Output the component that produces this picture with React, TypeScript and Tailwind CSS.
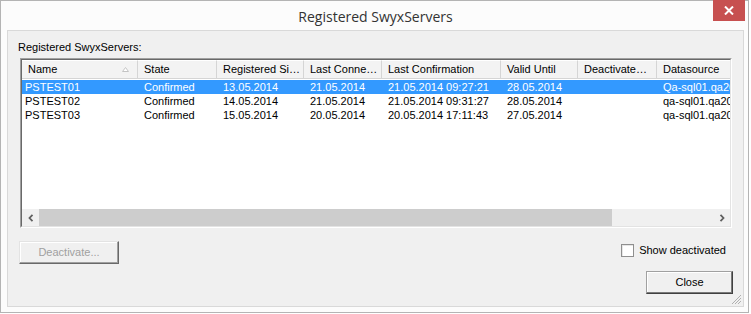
import React from 'react';

// --- Data ---
interface ServerRow {
  name: string;
  state: string;
  registered: string;
  lastConnect: string;
  lastConfirm: string;
  validUntil: string;
  deactivated: string;
  datasource: string;
}

const rows: ServerRow[] = [
  { name: 'PSTEST01', state: 'Confirmed', registered: '13.05.2014', lastConnect: '21.05.2014', lastConfirm: '21.05.2014 09:27:21', validUntil: '28.05.2014', deactivated: '', datasource: 'Qa-sql01.qa2014.local' },
  { name: 'PSTEST02', state: 'Confirmed', registered: '14.05.2014', lastConnect: '21.05.2014', lastConfirm: '21.05.2014 09:31:27', validUntil: '28.05.2014', deactivated: '', datasource: 'qa-sql01.qa2014.local' },
  { name: 'PSTEST03', state: 'Confirmed', registered: '15.05.2014', lastConnect: '20.05.2014', lastConfirm: '20.05.2014 17:11:43', validUntil: '27.05.2014', deactivated: '', datasource: 'qa-sql01.qa2014.local' },
];

// column widths measured off the screenshot
const columns: { label: string; key: keyof ServerRow; w: string }[] = [
  { label: 'Name', key: 'name', w: 'w-[116px]' },
  { label: 'State', key: 'state', w: 'w-[79px]' },
  { label: 'Registered Si…', key: 'registered', w: 'w-[87px]' },
  { label: 'Last Conne…', key: 'lastConnect', w: 'w-[78px]' },
  { label: 'Last Confirmation', key: 'lastConfirm', w: 'w-[119px]' },
  { label: 'Valid Until', key: 'validUntil', w: 'w-[77px]' },
  { label: 'Deactivate…', key: 'deactivated', w: 'w-[79px]' },
  { label: 'Datasource', key: 'datasource', w: 'w-[130px]' },
];

const uiFont = { fontFamily: '"Liberation Sans", Arial, sans-serif' };

function ChevronLeft() {
  return (
    <svg width="6" height="8" viewBox="0 0 6 8"><polyline points="4.5,0.8 1.5,4 4.5,7.2" fill="none" stroke="#606060" strokeWidth="1.8" /></svg>
  );
}

function ChevronRight() {
  return (
    <svg width="6" height="8" viewBox="0 0 6 8"><polyline points="1.5,0.8 4.5,4 1.5,7.2" fill="none" stroke="#606060" strokeWidth="1.8" /></svg>
  );
}

function App() {
  return (
    <div className="w-[751px] h-[314px] bg-white text-[11px] text-black" style={uiFont}>
      {/* --- Window frame --- */}
      <div className="relative w-[749px] h-[313px] border border-[#b4b4b4] bg-[#fcfcfc] flex flex-col pl-[6px] pr-[4px] pb-[5px]">
        {/* Title bar */}
        <div className="h-[29px] shrink-0 flex items-center justify-center">
          <span className="text-[14px] text-[#333333] mt-[1px]" style={{ fontFamily: '"Open Sans", "Noto Sans", sans-serif' }}>Registered SwyxServers</span>
        </div>
        <button className="absolute top-[-1px] right-[3px] w-[32px] h-[21px] bg-[#c75050] flex items-center justify-center">
          <svg width="10" height="9" viewBox="0 0 10 9"><path d="M1 0.5 L9 8.5 M9 0.5 L1 8.5" stroke="white" strokeWidth="2" /></svg>
        </button>

        {/* Client area */}
        <div className="relative flex-1 border border-[#d9d9d9] bg-[#f0f0f0] flex flex-col pl-[12px] pr-[11px]">
          <div className="mt-[10px] h-[17px] leading-[13px] ml-[-2px]">Registered SwyxServers:</div>

          {/* List view (sunken) */}
          <div className="w-[712px] h-[170px] border border-t-[#a0a0a0] border-l-[#a0a0a0] border-b-white border-r-white">
            <div className="w-full h-full border border-t-[#696969] border-l-[#696969] border-b-[#e3e3e3] border-r-[#e3e3e3] bg-white flex flex-col overflow-hidden">
              {/* header */}
              <div className="h-[19px] shrink-0 flex bg-[#f3f3f3] border-b border-[#d5d5d5] whitespace-nowrap">
                {columns.map((c, i) => (
                  <div key={c.key} className={`${c.w} shrink-0 h-full flex items-center pl-[6px] border-r border-[#d5d5d5] border-t border-t-white relative`}>
                    {c.label}
                    {i === 0 && (
                      <svg className="absolute right-[8px] top-[6px]" width="7" height="5" viewBox="0 0 7 5"><polygon points="3.5,0.5 6.5,4.5 0.5,4.5" fill="white" stroke="#c4c4c4" strokeWidth="1" /></svg>
                    )}
                  </div>
                ))}
              </div>

              {/* rows */}
              <div className="pt-[1px] flex flex-col">
                {rows.map((r, idx) => (
                  <div key={r.name} className={`h-[14px] flex whitespace-nowrap leading-[14px] ${idx === 0 ? 'bg-[#3399ff] text-white' : ''}`}>
                    {columns.map((c, i) => (
                      <div key={c.key} className={`${c.w} shrink-0 overflow-hidden ${i === 0 ? 'pl-[3px]' : 'pl-[6px]'}`}>{r[c.key]}</div>
                    ))}
                  </div>
                ))}
              </div>

              <div className="flex-1" />

              {/* horizontal scroll bar */}
              <div className="h-[17px] shrink-0 flex bg-[#f0f0f0]">
                <div className="w-[17px] flex items-center justify-center"><ChevronLeft /></div>
                <div className="w-[573px] bg-[#cdcdcd]" />
                <div className="flex-1" />
                <div className="w-[17px] flex items-center justify-center"><ChevronRight /></div>
              </div>
            </div>
          </div>

          {/* options row */}
          <div className="flex justify-between mt-[13px]">
            <button className="ml-[-1px] w-[100px] h-[23px] border border-t-[#e3e3e3] border-l-[#e3e3e3] border-b-[#696969] border-r-[#696969] shadow-[inset_-1px_-1px_0_#a0a0a0,inset_1px_1px_0_#ffffff] text-[#a0a0a0] bg-[#f0f0f0] flex items-center justify-center">
              Deactivate...
            </button>
            <label className="flex items-center gap-[5px] mt-[3px] mr-[6px] h-[13px]">
              <span className="w-[13px] h-[13px] border border-[#8f8f8f] bg-white shadow-[inset_1px_1px_0_#e6e6e6]" />
              <span>Show deactivated</span>
            </label>
          </div>

          <div className="flex justify-end mt-[7px] mr-[-1px]">
            <button className="w-[87px] h-[23px] border border-t-[#a0a0a0] border-l-[#a0a0a0] border-b-[#404040] border-r-[#404040] shadow-[inset_-1px_-1px_0_#7a7a7a,inset_1px_1px_0_#ffffff] bg-[#f0f0f0] flex items-center justify-center">
              Close
            </button>
          </div>

          {/* size grip */}
          <svg className="absolute right-[1px] bottom-[1px]" width="12" height="12" viewBox="0 0 12 12">
            <path d="M11 2 L2 11 M11 5 L5 11 M11 8 L8 11" stroke="#b0b0b0" strokeWidth="1" />
          </svg>
        </div>
      </div>
    </div>
  );
}

export default App;
